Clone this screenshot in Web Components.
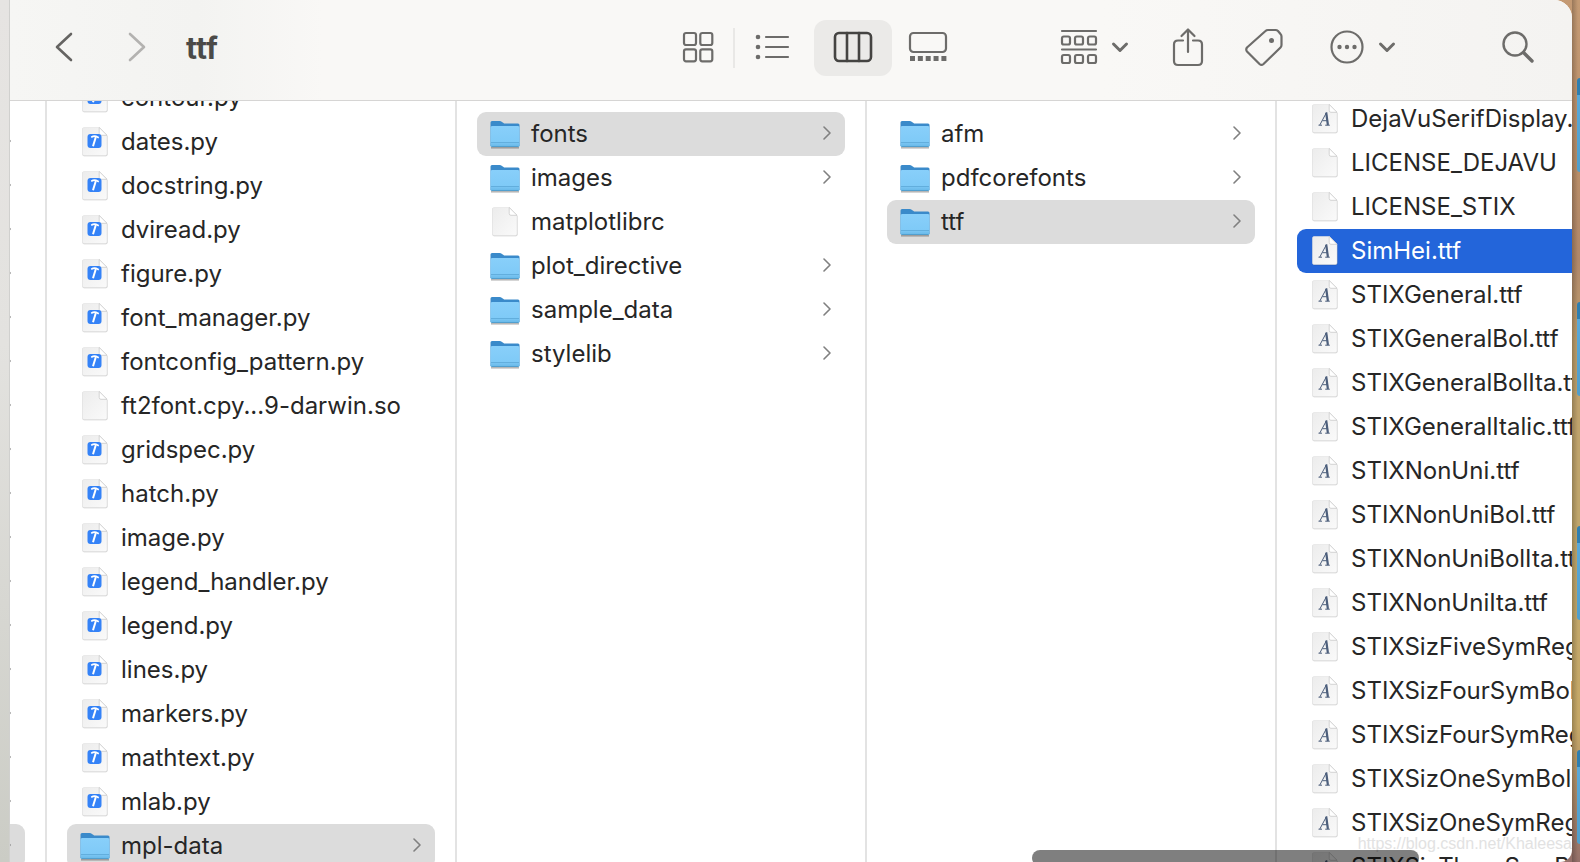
<!DOCTYPE html>
<html lang="en">
<head>
<meta charset="utf-8">
<title>ttf</title>
<style>
html, body { height: 100%; margin: 0; }
body { overflow: hidden; font-family: Inter, "Liberation Sans", sans-serif; color: #262626; }
</style>
</head>
<body>
<finder-desktop>
  <finder-window>
    <finder-toolbar slot="toolbar" heading="ttf"></finder-toolbar>
    <finder-column class="parent" id="c0"></finder-column>
    <finder-column id="c1"></finder-column>
    <finder-column id="c2"></finder-column>
    <finder-column id="c3"></finder-column>
    <finder-column class="last" id="c4"></finder-column>
  </finder-window>
</finder-desktop>

<script>
const page = (extra) => `<svg width="32" height="32" viewBox="0 0 32 32"><defs><linearGradient id="p" x1="0" y1="0" x2="1" y2="1"><stop offset="0" stop-color="#ececec"/><stop offset="1" stop-color="#fafafa"/></linearGradient></defs><path d="M4.500 2h16l8 8v18.500q0 1.800-1.500 1.800H5q-1.500 0-1.500-1.800V3q0-1 1-1z" fill="#000" fill-opacity=".22"/><path d="M5 1.500h15.500l7.500 7.500v19q0 1.500-1.500 1.500h-21.500q-1.500 0-1.500-1.500V3q0-1.500 1.500-1.500z" fill="url(#p)" stroke="#e2e2e2" stroke-width=".6"/><path d="M20.200 1.500v6q0 1.800 1.800 1.800h6z" fill="#fff" stroke="#c4c4c4" stroke-width=".7"/>${extra}</svg>`;
const GLYPHS = {
  folder: `<svg width="32" height="32" viewBox="0 0 32 32"><defs><linearGradient id="f" x1="0" y1="0" x2="0" y2="1"><stop offset="0" stop-color="#88cffa"/><stop offset=".75" stop-color="#7fcaf7"/><stop offset="1" stop-color="#66b6e6"/></linearGradient></defs><path d="M2 29.800h28" stroke="#000" stroke-opacity=".3" stroke-width="1.500"/><path d="M1.500 28V4.500q0-1.500 1.500-1.500h7.500q1.500 0 2.500 1l1.500 1q.5.500 1.500.500H29q1.500 0 1.500 1.500V28z" fill="#3a8aca"/><path d="M1.500 9.500q0-1.500 1.500-1.500H29q1.500 0 1.500 1.500v18q0 1.500-1.500 1.500H3q-1.500 0-1.500-1.500z" fill="url(#f)"/><path d="M2 24.500h28" stroke="#62aedd" stroke-width="1"/><path d="M2.500 28.500h27" stroke="#529fce" stroke-width="1"/></svg>`,
  doc: page(''),
  py: page(`<rect x="8.500" y="8" width="14" height="14" rx="3" fill="#3482f7"/><path d="M12.200 11.200q2.500-1.400 4.800-.9l2.800 1.500" fill="none" stroke="#fff" stroke-width="1.700"/><path d="M16.800 11l-2.800 9.200" fill="none" stroke="#fff" stroke-width="2"/>`),
  font: page(`<g fill="none" stroke="#4d5f7c"><path d="M10.800 22L17.500 9.500" stroke-width="1"/><path d="M17.200 9.500l1.700 12.500" stroke-width="2.200"/><path d="M13.500 17.700h4.500M9.500 22.200h3.500M16.200 22.200h4.600" stroke-width="1"/></g>`),
};
const CHEVRON = `<svg class="chev" width="8" height="14" viewBox="0 0 8 14"><path d="M1 1l6 6-6 6" fill="none" stroke="#808080" stroke-width="1.600" stroke-linecap="round" stroke-linejoin="round"/></svg>`;

class FinderDesktop extends HTMLElement {
  constructor() {
    super();
    this.attachShadow({ mode: 'open' }).innerHTML = `
    <style>
      :host { display: grid; grid-template-columns: 10px minmax(0, 1fr) 8px; height: 100vh; overflow: hidden;
        background: linear-gradient(#c49a74, #b98e68 20%, #b0876a 30%, #bfa06c 40%, #bfa66c 60%, #c6a867 84%, #95706a); }
      .behind { background: linear-gradient(#e6e4e2, #e3e2df 40%, #cbccc5); border-right: 1px solid #d0d0ce; box-sizing: border-box; }
      .files { display: flex; flex-direction: column; gap: 130px; padding: 78px 0 0 5px; background: linear-gradient(to right, rgba(0,0,0,.22), transparent 6px); }
      .files i { flex: none; height: 94px; border-radius: 6px 0 0 6px; background: linear-gradient(#2f7fb0 17px, #5aa9d8 17px, #4f9ecb 94px); }
    </style>
    <div class="behind"></div><slot></slot>
    <div class="files"><i></i><i></i><i></i><i></i></div>`;
  }
}

class FinderWindow extends HTMLElement {
  constructor() {
    super();
    this.attachShadow({ mode: 'open' }).innerHTML = `
    <style>
      :host { display: grid; grid-template-rows: auto minmax(0, 1fr); position: relative; min-width: 0; height: 100vh; overflow: hidden;
        background: #fff; border-radius: 0 18px 12px 0; }
      .columns { display: flex; min-width: 0; overflow: hidden; }
      .thumb { position: absolute; left: 66%; width: 387px; bottom: -4px; height: 16px; margin-left: -9px; border-radius: 8px; background: rgba(0,0,0,.5); }
      .mark { position: absolute; right: 0; bottom: 8px; font: 16px/20px "Liberation Sans", sans-serif; color: #e2e2e2; white-space: nowrap; }
    </style>
    <slot name="toolbar"></slot>
    <div class="columns"><slot></slot></div>
    <div class="mark">https://blog.csdn.net/Khaleesa</div>
    <div class="thumb"></div>`;
  }
}

class FinderToolbar extends HTMLElement {
  constructor() {
    super();
    this.attachShadow({ mode: 'open' }).innerHTML = `
    <style>
      :host { display: flex; align-items: center; box-sizing: border-box; height: 101px; padding: 0 30px 4px 36px;
        border-bottom: 1px solid #d6d5d4; background: linear-gradient(to right, #f6f6f4, #f3f3f1 12%, #f9f8f6 20%, #f9f8f6 70%, #f4f3f1); }
      button { display: flex; align-items: center; justify-content: center; flex: none; height: 56px; padding: 0 0 2px; border: 0; border-radius: 12px; background: none; }
      svg { display: block; fill: none; stroke: #6d6c6a; stroke-width: 2.2; stroke-linecap: round; stroke-linejoin: round; }
      .nav { width: 36px; }
      .nav + .nav { margin-left: 37px; }
      .nav svg { stroke: #656462; stroke-width: 2.6; }
      .nav + .nav svg { stroke: #b3b2b0; }
      h1 { flex: 1; margin: 0 0 0 31px; font-size: 30px; line-height: 36px; font-weight: 700; color: #4b4a48; }
      .views { display: flex; align-items: center; }
      .icons { width: 70px; }
      .list { width: 74px; }
      .cols { width: 78px; margin-left: 5px; background: #ebeae8; }
      .cols svg { stroke: #454442; stroke-width: 2.6; }
      .gallery { width: 72px; }
      hr { width: 2px; height: 40px; margin: 0; border: 0; background: #e9e8e6; }
      .tools { display: flex; align-items: center; margin-left: 96px; }
      .menu { gap: 13px; }
      .menu svg + svg { stroke-width: 3; }
      .share { width: 48px; margin-left: 35px; }
      .tag { width: 48px; margin-left: 28px; }
      .more { margin-left: 41px; }
      .search { width: 48px; margin-left: 98px; }
      .search svg { stroke-width: 2.4; }
    </style>
    <button class="nav" aria-label="Back"><svg width="20" height="32" viewBox="0 0 20 32"><path d="M17 3L3 16l14 13"/></svg></button>
    <button class="nav" aria-label="Forward"><svg width="20" height="32" viewBox="0 0 20 32"><path d="M3 3l14 13L3 29"/></svg></button>
    <h1></h1>
    <div class="views">
      <button class="icons" aria-label="Icons"><svg width="32" height="32" viewBox="0 0 32 32"><rect x="2" y="2" width="12" height="12" rx="2"/><rect x="18.300" y="2" width="12" height="12" rx="2"/><rect x="2" y="18.300" width="12" height="12" rx="2"/><rect x="18.300" y="18.300" width="12" height="12" rx="2"/></svg></button>
      <hr>
      <button class="list" aria-label="List"><svg width="36" height="32" viewBox="0 0 36 32"><path d="M12 6h22M12 16h22M12 26h22"/><g fill="#6d6c6a" stroke="none"><circle cx="4" cy="6" r="2.300"/><circle cx="4" cy="16" r="2.300"/><circle cx="4" cy="26" r="2.300"/></g></svg></button>
      <button class="cols" aria-label="Columns" aria-pressed="true"><svg width="40" height="32" viewBox="0 0 40 32"><rect x="2" y="2" width="36" height="28" rx="4"/><path d="M14 2v28M26 2v28"/></svg></button>
      <button class="gallery" aria-label="Gallery"><svg width="40" height="32" viewBox="0 0 40 32"><rect x="2" y="2" width="36" height="19" rx="3.500"/><path d="M2 27.500h36.500" style="stroke-width:5;stroke-linecap:butt" stroke-dasharray="5 2.850"/></svg></button>
    </div>
    <div class="tools">
      <button class="menu" aria-label="Group"><svg width="38" height="38" viewBox="0 0 38 38"><path d="M2 3h34M2 21.500h34"/><g><rect x="2" y="8.500" width="8" height="8" rx="1.800"/><rect x="15" y="8.500" width="8" height="8" rx="1.800"/><rect x="28" y="8.500" width="8" height="8" rx="1.800"/><rect x="2" y="27" width="8" height="8" rx="1.800"/><rect x="15" y="27" width="8" height="8" rx="1.800"/><rect x="28" y="27" width="8" height="8" rx="1.800"/></g></svg><svg width="18" height="12" viewBox="0 0 18 12"><path d="M2.500 3L9 9.500 15.500 3"/></svg></button>
      <button class="share" aria-label="Share"><svg width="34" height="42" viewBox="0 0 34 42"><path d="M12 14.500H7q-4 0-4 4V35q0 4 4 4h20q4 0 4-4V18.500q0-4-4-4h-5M17 26V4M10.500 10L17 3.500l6.500 6.500"/></svg></button>
      <button class="tag" aria-label="Tags"><svg width="40" height="42" viewBox="0 0 40 42"><path d="M21.500 5q1-1 2.500-1h7.500q1.500 0 2.500 1l2.500 3q1 1 1 2.500v8.500q0 1.500-1 2.500L19.500 38q-2 1.800-4 0L3 25.500q-1.500-2 0-4z"/><circle cx="27.500" cy="14.500" r="2.500" fill="#6d6c6a" stroke="none"/></svg></button>
      <button class="menu more" aria-label="More"><svg width="36" height="36" viewBox="0 0 36 36"><circle cx="18" cy="18" r="15.500"/><g fill="#6d6c6a" stroke="none"><circle cx="10.500" cy="18" r="2.200"/><circle cx="18" cy="18" r="2.200"/><circle cx="25.500" cy="18" r="2.200"/></g></svg><svg width="18" height="12" viewBox="0 0 18 12"><path d="M2.500 3L9 9.500 15.500 3"/></svg></button>
      <button class="search" aria-label="Search"><svg width="34" height="34" viewBox="0 0 34 34"><circle cx="14" cy="14" r="11.500"/><path d="M22.500 22.500l8.500 8.500" style="stroke-width:3.400"/></svg></button>
    </div>`;
  }
  connectedCallback() { this.shadowRoot.querySelector('h1').textContent = this.getAttribute('heading'); }
}

class FinderRow extends HTMLElement {
  constructor() {
    super();
    this.attachShadow({ mode: 'open' }).innerHTML = `
    <style>
      :host { display: block; }
      button { display: flex; align-items: center; width: 100%; height: 44px; padding: 0 14px 0 12px; border: 0; border-radius: 9px; background: none;
        font: inherit; font-size: 24px; line-height: 32px; color: inherit; text-align: left; }
      svg { display: block; flex: none; }
      .chev { margin-bottom: 2px; }
      .label { flex: 1 0 auto; margin-left: 10px; white-space: nowrap; }
      :host([state=path]) button { background: #dcdcdc; }
      :host([state=active]) button { background: #2365da; color: #fff; }
    </style>
    <button type="button"><span class="icon"></span><span class="label"><slot></slot></span></button>`;
  }
  connectedCallback() {
    const kind = this.getAttribute('kind'), root = this.shadowRoot;
    root.querySelector('.icon').innerHTML = GLYPHS[kind];
    if (kind === 'folder') root.querySelector('button').insertAdjacentHTML('beforeend', CHEVRON);
  }
}

class FinderColumn extends HTMLElement {
  constructor() {
    super();
    this.attachShadow({ mode: 'open' }).innerHTML = `
    <style>
      :host { display: block; flex: none; box-sizing: border-box; width: 410px; padding: 0 20px; border-right: 2px solid #e3e3e3; overflow: hidden; }
      :host(.parent) { display: flex; justify-content: flex-end; width: 37px; padding-left: 0; }
      :host(.parent) .rows { flex: none; width: 368px; }
      :host(.last) { flex: 1; min-width: 0; border: 0; padding-right: 0; }
      :host(.last) .rows { width: 368px; }
      .rows { margin-top: var(--scroll, 11px); }
    </style><div class="rows"></div>`;
  }
  set rows(list) {
    this.shadowRoot.querySelector('.rows').append(...list.map(([kind, name, state]) => {
      const row = document.createElement('finder-row');
      row.setAttribute('kind', kind);
      if (state) row.setAttribute('state', state);
      row.textContent = name;
      return row;
    }));
  }
}

customElements.define('finder-row', FinderRow);
customElements.define('finder-column', FinderColumn);
customElements.define('finder-toolbar', FinderToolbar);
customElements.define('finder-window', FinderWindow);
customElements.define('finder-desktop', FinderDesktop);

const column = (id, scroll, rows) => {
  const el = document.getElementById(id);
  el.style.setProperty('--scroll', scroll + 'px');
  el.rows = rows;
};
column('c0', -25, Array.from({ length: 18 }, (_, i) => ['folder', '', i === 17 ? 'path' : '']));
column('c1', -25, [
  ...['contour', 'dates', 'docstring', 'dviread', 'figure', 'font_manager', 'fontconfig_pattern'].map(n => ['py', n + '.py']),
  ['doc', 'ft2font.cpy...9-darwin.so'],
  ...['gridspec', 'hatch', 'image', 'legend_handler', 'legend', 'lines', 'markers', 'mathtext', 'mlab'].map(n => ['py', n + '.py']),
  ['folder', 'mpl-data', 'path'],
]);
column('c2', 11, [['folder', 'fonts', 'path'], ['folder', 'images'], ['doc', 'matplotlibrc'], ['folder', 'plot_directive'], ['folder', 'sample_data'], ['folder', 'stylelib']]);
column('c3', 11, [['folder', 'afm'], ['folder', 'pdfcorefonts'], ['folder', 'ttf', 'path']]);
column('c4', -4, [
  ['font', 'DejaVuSerifDisplay.ttf'], ['doc', 'LICENSE_DEJAVU'], ['doc', 'LICENSE_STIX'], ['font', 'SimHei.ttf', 'active'],
  ...['General', 'GeneralBol', 'GeneralBolIta', 'GeneralItalic', 'NonUni', 'NonUniBol', 'NonUniBolIta', 'NonUniIta', 'SizFiveSymReg', 'SizFourSymBol', 'SizFourSymReg', 'SizOneSymBol', 'SizOneSymReg', 'SizThreeSymBol'].map(n => ['font', 'STIX' + n + '.ttf']),
]);
</script>
</body>
</html>
